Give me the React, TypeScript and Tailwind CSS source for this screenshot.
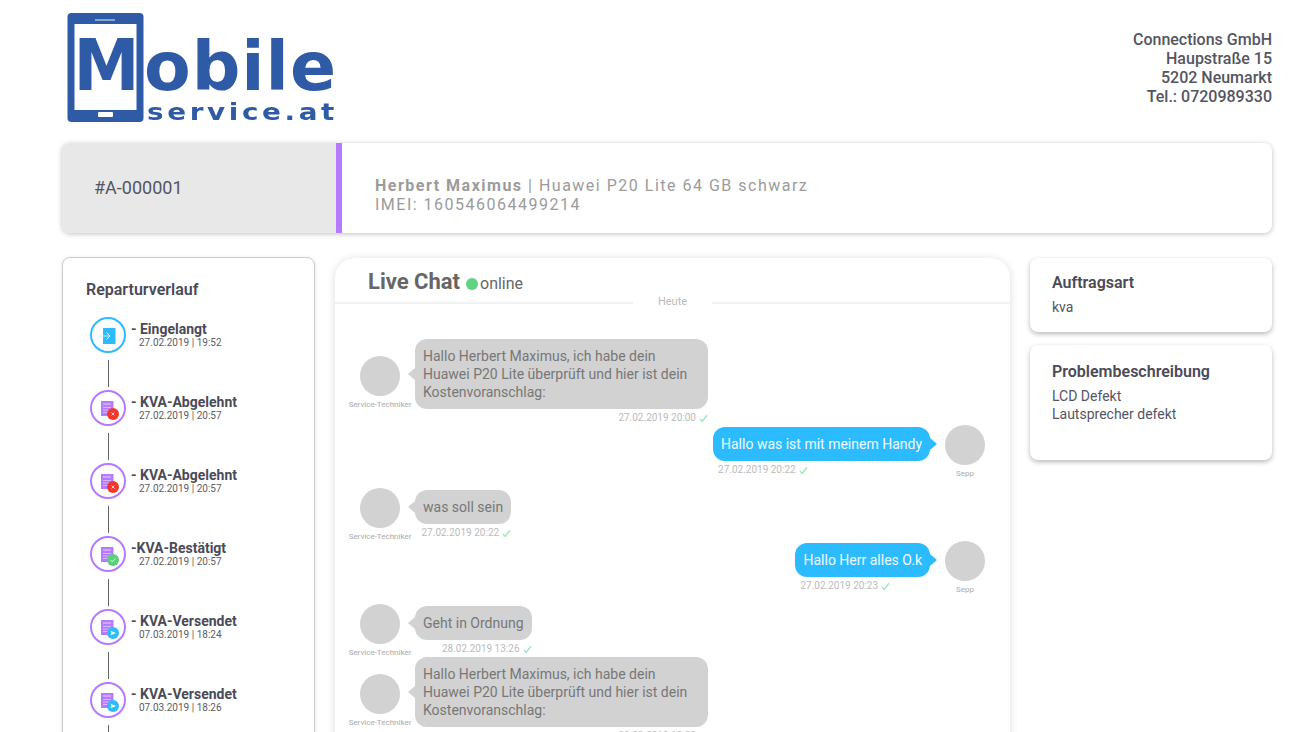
import React from "react";

const history = [
  { title: "- Eingelangt", date: "27.02.2019 | 19:52", kind: "in" },
  { title: "- KVA-Abgelehnt", date: "27.02.2019 | 20:57", kind: "no" },
  { title: "- KVA-Abgelehnt", date: "27.02.2019 | 20:57", kind: "no" },
  { title: "-KVA-Bestätigt", date: "27.02.2019 | 20:57", kind: "ok" },
  { title: "- KVA-Versendet", date: "07.03.2019 | 18:24", kind: "send" },
  { title: "- KVA-Versendet", date: "07.03.2019 | 18:26", kind: "send" },
];

const longText = (
  <>
    Hallo Herbert Maximus, ich habe dein
    <br />
    Huawei P20 Lite überprüft und hier ist dein
    <br />
    Kostenvoranschlag:
  </>
);

function Logo() {
  return (
    <svg width="272" height="116" viewBox="0 0 272 116" className="blur-[0.5px]">
      <rect x="0.5" y="1" width="76" height="109" rx="4" fill="#2f5aa5" />
      <rect x="7.5" y="12" width="62" height="86" fill="#fff" />
      <rect x="28" y="7" width="20" height="2" fill="#8aa3cf" />
      <rect x="31" y="100" width="15" height="5" rx="1" fill="#fff" />
      <g fill="#2f5aa5" fontFamily="'DejaVu Sans', sans-serif" fontWeight="700">
        <text x="6.5" y="78" fontSize="71" textLength="66" lengthAdjust="spacingAndGlyphs">M</text>
        <text x="77" y="78" fontSize="68" textLength="192" lengthAdjust="spacing">obile</text>
        <text x="80" y="107.5" fontSize="23" letterSpacing="3" textLength="191" lengthAdjust="spacingAndGlyphs">service.at</text>
      </g>
    </svg>
  );
}

function HistoryIcon({ kind }: { kind: string }) {
  if (kind === "in") {
    return (
      <svg width="36" height="36" viewBox="0 0 36 36" className="shrink-0">
        <circle cx="18" cy="18" r="17" fill="#fff" stroke="#2dbbff" strokeWidth="2" />
        <rect x="13" y="11" width="12.5" height="16" fill="#2dbbff" />
        <path d="M9 19h11M16.5 15.5 20 19l-3.5 3.5" fill="none" stroke="#c5ecff" strokeWidth="1" />
      </svg>
    );
  }
  return (
    <svg width="36" height="36" viewBox="0 0 36 36" className="shrink-0">
      <circle cx="18" cy="18" r="17" fill="#fff" stroke="#b57bff" strokeWidth="2" />
      <rect x="11" y="11" width="12.5" height="15" fill="#b57bff" />
      <path d="M13 14h8" stroke="#e6d3ff" strokeWidth="1" />
      <path d="M13 17.5h8M13 20h8M13 22.5h5" stroke="#d4b5ff" strokeWidth="1" />
      {kind === "no" && (
        <>
          <circle cx="23" cy="24" r="6" fill="#f5362a" />
          <path d="M21.5 22.5l3 3M24.5 22.5l-3 3" stroke="#ffc9c5" strokeWidth="1" />
        </>
      )}
      {kind === "ok" && (
        <>
          <circle cx="23" cy="24" r="6" fill="#5ccf7d" />
          <path d="M20.8 24.2l1.6 1.6 3-3.3" fill="none" stroke="#fff" strokeWidth="1" />
        </>
      )}
      {kind === "send" && (
        <>
          <circle cx="23" cy="24" r="6" fill="#2dbbff" />
          <path d="M20.5 21.8l5.5 2.2-5.5 2.2 1-2.2z" fill="#fff" />
        </>
      )}
    </svg>
  );
}

function Check() {
  return (
    <svg width="9" height="9" viewBox="0 0 9 9" className="ml-[3px] shrink-0">
      <path d="M1 5l2.2 2.4L8 1.2" fill="none" stroke="#9be9b8" strokeWidth="1.4" />
    </svg>
  );
}

function Avatar({ label }: { label: string }) {
  return (
    <div className="flex w-10 shrink-0 flex-col items-center">
      <div className="h-10 w-10 rounded-full bg-[#d2d2d2]" />
      <div className="mt-[3px] whitespace-nowrap text-[8px] leading-3 text-[#aaaaaa]">{label}</div>
    </div>
  );
}

function Time({ value }: { value: string }) {
  return (
    <span className="flex items-center whitespace-nowrap text-[10px] leading-3 text-[#bbbbbb]">
      {value}
      <Check />
    </span>
  );
}

function LeftMessage({ text, time, rowClass, avatarClass, bubbleClass, widthClass }: { text: React.ReactNode; time: string; rowClass: string; avatarClass: string; bubbleClass: string; widthClass: string }) {
  return (
    <div className={`flex items-start gap-[15px] pl-[25px] ${rowClass}`}>
      <div className={avatarClass}>
        <Avatar label="Service-Techniker" />
      </div>
      <div className={`flex flex-col items-end ${bubbleClass}`}>
        <div className={`relative rounded-xl bg-[#d2d2d2] px-2 py-2 text-sm leading-[18px] text-[#777777] ${widthClass}`}>
          <div className="absolute -left-[7px] top-1/2 h-0 w-0 -translate-y-1/2 border-y-[6px] border-r-[7px] border-y-transparent border-r-[#d2d2d2]" />
          {text}
        </div>
        <div className="mt-[3px]">
          <Time value={time} />
        </div>
      </div>
    </div>
  );
}

function RightMessage({ text, time, rowClass }: { text: string; time: string; rowClass: string }) {
  return (
    <div className={`flex items-start justify-end gap-[15px] pr-[25px] ${rowClass}`}>
      <div className="flex flex-col pt-[2px]">
        <div className="relative rounded-xl bg-[#2dbbff] px-2 py-2 text-sm leading-[18px] text-[#f2fbff]">
          <div className="absolute -right-[7px] top-1/2 h-0 w-0 -translate-y-1/2 border-y-[6px] border-l-[7px] border-y-transparent border-l-[#2dbbff]" />
          {text}
        </div>
        <div className="mt-[3px] pl-[5px]">
          <Time value={time} />
        </div>
      </div>
      <Avatar label="Sepp" />
    </div>
  );
}

export default function App() {
  return (
    <div className="h-[732px] overflow-hidden bg-white pl-[62px] pr-[30px] font-['Roboto',sans-serif]">
      <header className="flex h-[143px] items-start justify-between">
        <div className="ml-[5px] mt-[12px]">
          <Logo />
        </div>
        <div className="pt-[30px] text-right text-base font-medium leading-[19px] text-[#55555f]">
          <div>Connections GmbH</div>
          <div>Haupstraße 15</div>
          <div>5202 Neumarkt</div>
          <div>Tel.: 0720989330</div>
        </div>
      </header>

      <section className="flex h-[90px] overflow-hidden rounded-lg bg-white shadow-[0_1px_5px_rgba(0,0,0,0.25)]">
        <div className="flex w-[274px] items-center bg-[#e8e8e8] pl-[32px] text-lg text-[#55555f]">#A-000001</div>
        <div className="w-[6px] bg-[#b57bff]" />
        <div className="flex flex-col justify-center pl-[33px] pt-[13px] text-base leading-[19px] tracking-[1.5px] text-[#9b9b9b]">
          <div>
            <span className="font-bold">Herbert Maximus</span> | Huawei P20 Lite 64 GB schwarz
          </div>
          <div>IMEI: 160546064499214</div>
        </div>
      </section>

      <main className="mt-[25px] flex items-start gap-5">
        <aside className="-mt-px h-[500px] w-[253px] shrink-0 rounded-lg border border-[#cccccc] bg-white pl-[23px] pt-[22px] shadow-[0_1px_4px_rgba(0,0,0,0.12)]">
          <h2 className="text-base font-semibold leading-5 text-[#4a4a58]">Reparturverlauf</h2>
          <div className="ml-1 mt-[17px]">
            {history.map((item, i) => (
              <div key={i}>
                <div className="flex h-9 items-start gap-[5px]">
                  <HistoryIcon kind={item.kind} />
                  <div className="pt-[4px]">
                    <div className="text-sm font-bold leading-4 text-[#4a4a58]">{item.title}</div>
                    <div className="-mt-px ml-2 text-[10px] leading-[13px] text-[#5c5c66]">{item.date}</div>
                  </div>
                </div>
                <div className="mb-[3px] ml-[18px] mt-[7px] h-[27px] w-px bg-[#666666]" />
              </div>
            ))}
          </div>
        </aside>

        <section className="relative h-[500px] w-[675px] shrink-0 rounded-[20px] bg-white shadow-[0_1px_8px_rgba(0,0,0,0.14)]">
          <div className="flex h-[46px] items-center border-b-2 border-[#f2f2f2] pl-[33px] pt-[4px]">
            <h1 className="text-[22px] font-bold leading-7 text-[#666666]">Live Chat</h1>
            <span className="ml-[6px] mt-[3px] h-3 w-3 rounded-full bg-[#5fd37f]" />
            <span className="ml-[2px] mt-[3px] text-base text-[#666666]">online</span>
          </div>
          <div className="absolute left-[298px] top-[36px] w-[79px] bg-white text-center text-[11px] leading-4 text-[#bbbbbb]">Heute</div>
          <div className="pt-[35px]">
            <LeftMessage text={longText} time="27.02.2019 20:00" rowClass="h-[86px]" avatarClass="pt-[17px]" bubbleClass="pt-0" widthClass="w-[293px]" />
            <RightMessage text="Hallo was ist mit meinem Handy" time="27.02.2019 20:22" rowClass="h-[63px]" />
            <LeftMessage text="was soll sein" time="27.02.2019 20:22" rowClass="h-[53px]" avatarClass="pt-0" bubbleClass="pt-[2px]" widthClass="w-fit" />
            <RightMessage text="Hallo Herr alles O.k" time="27.02.2019 20:23" rowClass="h-[63px]" />
            <LeftMessage text="Geht in Ordnung" time="28.02.2019 13:26" rowClass="h-[53px]" avatarClass="pt-0" bubbleClass="pt-[2px]" widthClass="w-fit" />
            <LeftMessage text={longText} time="28.02.2019 13:30" rowClass="h-[86px]" avatarClass="pt-[17px]" bubbleClass="pt-0" widthClass="w-[293px]" />
          </div>
        </section>

        <div className="flex w-[242px] shrink-0 flex-col gap-[13px]">
          <div className="h-[74px] rounded-lg bg-white pl-[22px] pt-[15px] shadow-[0_2px_5px_rgba(0,0,0,0.28)]">
            <h3 className="text-base font-semibold leading-[20px] text-[#4a4a58]">Auftragsart</h3>
            <p className="mt-[5px] text-sm leading-[18px] text-[#55555f]">kva</p>
          </div>
          <div className="h-[115px] rounded-lg bg-white pl-[22px] pt-[17px] shadow-[0_2px_5px_rgba(0,0,0,0.28)]">
            <h3 className="text-base font-semibold leading-[20px] text-[#4a4a58]">Problembeschreibung</h3>
            <p className="mt-[5px] text-sm leading-[18px] text-[#55555f]">
              LCD Defekt
              <br />
              Lautsprecher defekt
            </p>
          </div>
        </div>
      </main>
    </div>
  );
}
